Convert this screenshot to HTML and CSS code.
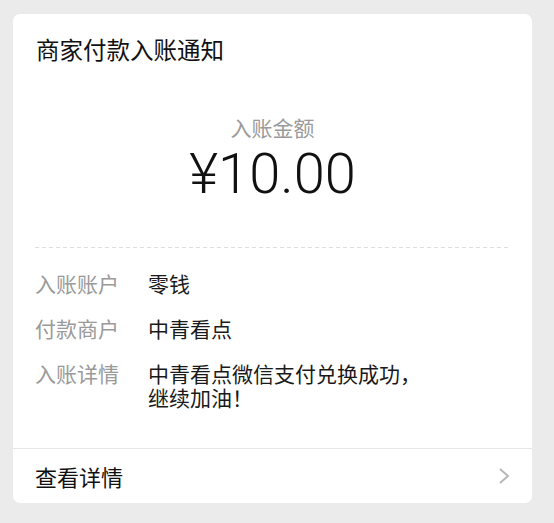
FILE: index.html
```html
<!DOCTYPE html>
<html lang="zh-CN">
<head>
  <meta charset="UTF-8" />
  <meta name="viewport" content="width=device-width, initial-scale=1" />
  <title>商家付款入账通知</title>
  <link rel="stylesheet" href="styles.css">
</head>
<body>

  <!-- 通知卡片 -->
  <section class="card">
    <h1 class="titulo">商家付款入账通知</h1>

    <div class="valor">
      <div class="valor-rotulo">入账金额</div>
      <div class="valor-numero">¥10.00</div>
    </div>

    <div class="tracejado"></div>

    <dl class="detalhes">
      <dt>入账账户</dt>
      <dd>零钱</dd>
      <dt>付款商户</dt>
      <dd>中青看点</dd>
      <dt>入账详情</dt>
      <dd>中青看点微信支付兑换成功，<br>继续加油！</dd>
    </dl>

    <a class="rodape" href="#">
      <span>查看详情</span>
      <svg class="seta" width="12" height="18" viewBox="0 0 12 18">
        <polyline points="2,2 10,9 2,16" fill="none" stroke="#b8b8b8" stroke-width="2" />
      </svg>
    </a>
  </section>

</body>
</html>
```

FILE: styles.css
```css
* {
  box-sizing: border-box;
}

body, html {
  margin: 0; padding: 0;
  width: 100%; height: 100%;
  background: #ebebeb;
  font-family: 'Noto Sans CJK SC', 'Noto Sans', sans-serif;
  overflow: hidden;
}

/* Cartão branco */
.card {
  margin: 14px 0 0 13px;
  width: 519px;
  background: #fff;
  border-radius: 7px;
  overflow: hidden;
}

.titulo {
  margin: 0;
  padding: 18px 23px 0;
  font-size: 23.5px;
  line-height: 34px;
  font-weight: normal;
  color: #111;
}

/* Bloco do valor */
.valor {
  padding: 47px 0 43px;
  text-align: center;
}

.valor-rotulo {
  font-size: 21px;
  line-height: 28px;
  color: #9a9a9a;
}

.valor-numero {
  margin-top: 3px;
  font-family: Roboto, 'Liberation Sans', sans-serif;
  font-weight: 300;
  font-size: 56px;
  line-height: 60px;
  color: #111;
}

.tracejado {
  height: 1px;
  margin: 0 21px 0 22px;
  background-image: linear-gradient(to right, #dedede 4px, transparent 4px);
  background-size: 7px 1px;
}

/* Linhas de detalhe */
.detalhes {
  display: grid;
  grid-template-columns: 113px 1fr;
  row-gap: 21px;
  margin: 0;
  padding: 23px 22px 39px;
  font-size: 21px;
  line-height: 24px;
}

.detalhes dt {
  color: #9a9a9a;
}

.detalhes dd {
  margin: 0;
  color: #1a1a1a;
}

/* Rodapé */
.rodape {
  display: flex;
  align-items: center;
  justify-content: space-between;
  height: 55px;
  padding: 0 22px 0 22px;
  border-top: 1px solid #e6e6e6;
  font-size: 22px;
  color: #111;
  text-decoration: none;
}

.seta {
  display: block;
}
```
